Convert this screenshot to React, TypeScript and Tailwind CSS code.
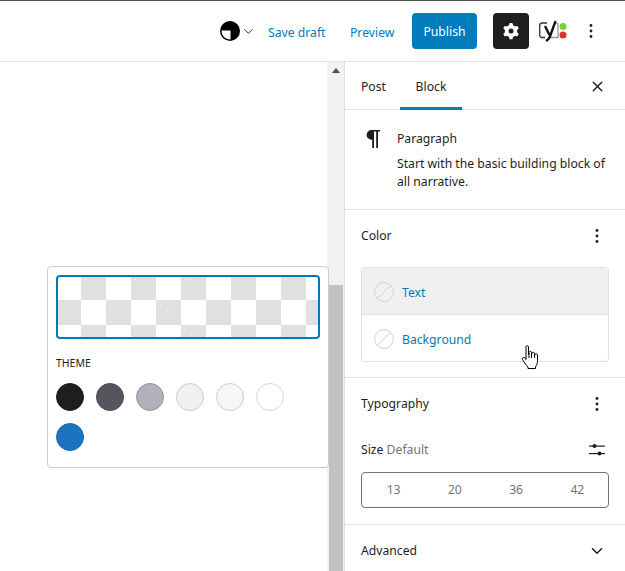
import { ChevronDown, X } from "lucide-react";

const FONT = "font-['Noto_Sans','Open_Sans',sans-serif]";
const SWATCHES = [
  "bg-[#1e1e1e] border-[#1e1e1e]",
  "bg-[#55555f] border-[#4a4a52]",
  "bg-[#b1b0bd] border-[#9392a0]",
  "bg-[#f0f0f0] border-[#cccccc]",
  "bg-[#f6f7f9] border-[#cccccc]",
  "bg-white border-[#d6d6d6]",
  "bg-[#1e73be] border-[#1a66a8]",
];

function Dots() {
  return (
    <button className="flex h-6 w-6 items-center justify-center">
      <svg width="24" height="24" viewBox="0 0 24 24" fill="#1e1e1e">
        <circle cx="12" cy="6.500" r="1.400" />
        <circle cx="12" cy="12" r="1.400" />
        <circle cx="12" cy="17.500" r="1.400" />
      </svg>
    </button>
  );
}

function NoColor() {
  return (
    <svg width="20" height="20" viewBox="0 0 20 20" className="shrink-0">
      <circle cx="10" cy="10" r="9.500" fill="none" stroke="#cfcfcf" />
      <path d="M3.500 16.500 16.500 3.500" stroke="#cfcfcf" />
    </svg>
  );
}

function StyleIcon() {
  return (
    <svg width="20" height="20" viewBox="0 0 20 20">
      <circle cx="10" cy="10" r="10" fill="#000" />
      <path d="M10.500 9.500H1.500A8.500 8.500 0 0 0 10.500 18.500Z" fill="#fff" />
    </svg>
  );
}

function GearIcon() {
  return (
    <svg width="24" height="24" viewBox="0 0 24 24" fill="#fff">
      <path
        fillRule="evenodd"
        d="M10.289 4.836A1 1 0 0111.275 4h1.450a1 1 0 01.986.836l.244 1.466c.788.26 1.503.679 2.108 1.218l1.393-.522a1 1 0 011.216.437l.725 1.256a1 1 0 01-.23 1.273l-1.148.944a6.025 6.025 0 010 2.435l1.149.946a1 1 0 01.23 1.272l-.726 1.257a1 1 0 01-1.216.437l-1.393-.522c-.605.54-1.320.958-2.108 1.218l-.244 1.466a1 1 0 01-.986.836h-1.450a1 1 0 01-.986-.836l-.244-1.466a5.995 5.995 0 01-2.108-1.218l-1.394.522a1 1 0 01-1.217-.436l-.725-1.257a1 1 0 01.23-1.272l1.150-.946a6.026 6.026 0 010-2.435l-1.150-.944a1 1 0 01-.23-1.273l.725-1.256a1 1 0 011.217-.437l1.393.522a5.994 5.994 0 012.108-1.218l.244-1.466zM14.500 12a2.500 2.500 0 11-5 0 2.500 2.500 0 015 0z"
      />
    </svg>
  );
}

function YoastIcon() {
  return (
    <svg width="30" height="24" viewBox="0 0 30 24" fill="none">
      <path d="M8 4H3A2.500 2.500 0 0 0 .7 6.500v9A2.500 2.500 0 0 0 3 18.500H6" stroke="#333" strokeWidth="1.300" />
      <path d="M15 4h1.500A2.500 2.500 0 0 1 19 6.500v12H10" stroke="#9a9a9a" strokeWidth="1.300" />
      <path d="M16.500 2 11 17.500c-.7 2-1.900 3.500-4 4.500" stroke="#111" strokeWidth="2.300" />
      <path d="M6 7 10.500 16" stroke="#111" strokeWidth="2.300" />
      <circle cx="24" cy="7.500" r="3.500" fill="#7ad03a" />
      <circle cx="24" cy="16" r="3.500" fill="#dc3232" />
    </svg>
  );
}

function HandCursor() {
  return (
    <svg width="19" height="25" viewBox="0 0 19 25" className="absolute left-[521px] top-[345px]">
      <path
        d="M5 1.500C5 .5 7.500 .5 7.500 1.500V9.500L8 7c.5-1 2.500-1 2.500.5V10l.5-2c.5-1 2.500-1 2.500.5V11l.5-1.500c.5-1 2.500-1 2.500.5v5.500c0 3-1 5-2 6.500v1.500H7v-1.500c-2-2-3-3.500-5.500-7.500-1-1.500 1-3 2.500-1.500l1 1.500Z"
        fill="#fff"
        stroke="#000"
        strokeLinejoin="round"
      />
      <path d="M8 8v5M10.500 8.500V13M13.500 9.500V13" stroke="#000" />
    </svg>
  );
}

function ParagraphIcon() {
  return (
    <svg width="16" height="18" viewBox="0 0 16 18" className="ml-[4px] mt-[1px] shrink-0" fill="#1e1e1e">
      <path d="M6.500 0H15v1.600h-2V18h-1.800V1.600H9V18H7.200V9.800h-.7A4.900 4.900 0 0 1 6.500 0Z" />
    </svg>
  );
}

function SlidersIcon() {
  return (
    <svg width="16" height="14" viewBox="0 0 16 14" fill="#1e1e1e">
      <rect x="0" y="2.500" width="16" height="1.200" />
      <rect x="0" y="10" width="16" height="1.200" />
      <circle cx="5.500" cy="3" r="2" />
      <circle cx="10.500" cy="10.500" r="2" />
    </svg>
  );
}

export default function App() {
  return (
    <div className={`relative flex h-[571px] w-[625px] flex-col overflow-hidden bg-white text-[12.2px] text-[#1e1e1e] ${FONT}`}>
      <header className="flex h-[62px] shrink-0 items-center border-b border-t border-b-[#e0e0e0] border-t-[#555555] pl-[220px]">
        <StyleIcon />
        <ChevronDown size={15} strokeWidth={1.500} className="ml-[1px]" />
        <span className="ml-[12px] w-[58px] whitespace-nowrap pt-[4px] text-[#007cba]">Save draft</span>
        <span className="ml-[24px] w-[44px] whitespace-nowrap pt-[4px] text-[#007cba]">Preview</span>
        <button className="ml-[18px] h-9 w-[65px] rounded-sm bg-[#007cba] pt-[3px] font-[450] text-white">Publish</button>
        <button className="ml-4 flex h-9 w-9 items-center justify-center rounded-sm bg-[#1e1e1e]">
          <GearIcon />
        </button>
        <span className="ml-[10px] flex">
          <YoastIcon />
        </span>
        <span className="ml-[10px] flex">
          <Dots />
        </span>
      </header>

      <div className="flex min-h-0 flex-1">
        <main className="flex min-w-0 flex-1 justify-end">
          <div className="flex h-full w-[17px] flex-col bg-[#f1f1f1]">
            <div className="flex h-[17px] items-center justify-center">
              <div className="h-0 w-0 border-x-4 border-b-[5px] border-x-transparent border-b-[#505050]" />
            </div>
            <div className="ml-[2px] mr-[1px] mt-[206px] flex-1 bg-[#c1c1c1]" />
          </div>
        </main>

        <aside className="w-[281px] shrink-0 border-l border-[#e0e0e0]">
          <div className="flex h-[48px] items-stretch border-b border-[#e0e0e0] pl-[16px] pr-[16px]">
            <span className="flex w-[39px] items-center pt-[3px]">Post</span>
            <span className="relative flex w-[62px] items-center justify-center pt-[3px] font-[450]">
              Block
              <span className="absolute -bottom-px left-0 h-[3px] w-full bg-[#007cba]" />
            </span>
            <span className="ml-auto flex items-center pr-[3px] pt-[1px]">
              <X size={17} strokeWidth={2} />
            </span>
          </div>

          <section className="flex h-[100px] gap-[16px] border-b border-[#e0e0e0] px-4 pt-[19px]">
            <span className="w-[20px] shrink-0">
              <ParagraphIcon />
            </span>
            <div className="pt-[1px]">
              <h2 className="font-[450] leading-[18px]">Paragraph</h2>
              <p className="mt-[7px] w-[216px] leading-[18px]">
                Start with the basic building block of all narrative.
              </p>
            </div>
          </section>

          <section className="h-[168px] border-b border-[#e0e0e0] px-4">
            <div className="flex h-[50px] items-center justify-between pt-[1px]">
              <h2 className="pt-[2px] font-[450]">Color</h2>
              <Dots />
            </div>
            <div className="mt-[7px] h-[95px] rounded-sm border border-[#e0e0e0]">
              <div className="flex h-[47px] items-center gap-[8px] border-b border-[#e0e0e0] bg-[#f0f0f0] pl-[12px] pt-[1px] text-[#007cba]">
                <NoColor />
                <span className="pt-[4px]">Text</span>
              </div>
              <div className="flex h-[46px] items-center gap-[8px] pl-[12px] pt-[1px] text-[#007cba]">
                <NoColor />
                <span className="pt-[4px]">Background</span>
              </div>
            </div>
          </section>

          <section className="h-[147px] border-b border-[#e0e0e0] px-4">
            <div className="flex h-[50px] items-center justify-between pt-[2px]">
              <h2 className="font-[450]">Typography</h2>
              <Dots />
            </div>
            <div className="mt-[12px] flex h-[20px] items-center justify-between pr-[4px]">
              <span>
                Size <span className="text-[#757575]">Default</span>
              </span>
              <SlidersIcon />
            </div>
            <div className="mt-[12px] grid h-[36px] grid-cols-4 rounded-sm border border-[#757575] pl-[1px] text-[#757575]">
              {[13, 20, 36, 42].map((size) => (
                <span key={size} className="flex items-center justify-center pt-[1px]">
                  {size}
                </span>
              ))}
            </div>
          </section>

          <section className="flex h-[50px] items-center justify-between px-4 pt-[2px]">
            <h2 className="font-[450]">Advanced</h2>
            <span className="flex w-6 justify-center">
              <ChevronDown size={18} strokeWidth={2} />
            </span>
          </section>
        </aside>
      </div>

      <div className="absolute left-[47px] top-[266px] h-[202px] w-[282px] rounded-sm border border-[#cccccc] bg-white p-2">
        <div className="relative h-[64px] w-[264px] overflow-hidden rounded-sm border-2 border-[#007cba] bg-[repeating-conic-gradient(#e0e0e0_0_25%,#fff_0_50%)] bg-[size:50px_50px] bg-origin-border">
          <svg width="260" height="60" className="absolute inset-0">
            <defs>
              <pattern id="noise" width="50" height="50" patternUnits="userSpaceOnUse" patternTransform="translate(-2 -2)">
                {[1, 4, 10, 15].map((d) => (
                  <g key={d} fill="#fff">
                    <rect x={25 + d} y={d} width="1" height="1" />
                    <rect x={d} y={25 + d} width="1" height="1" />
                  </g>
                ))}
              </pattern>
            </defs>
            <rect width="260" height="60" fill="url(#noise)" />
          </svg>
        </div>
        <h3 className="mt-[16px] text-[10.5px] uppercase leading-4">Theme</h3>
        <div className="mt-[12px] flex flex-wrap gap-[12px]">
          {SWATCHES.map((swatch) => (
            <span key={swatch} className={`h-7 w-7 rounded-full border ${swatch}`} />
          ))}
        </div>
      </div>

      <HandCursor />
    </div>
  );
}
